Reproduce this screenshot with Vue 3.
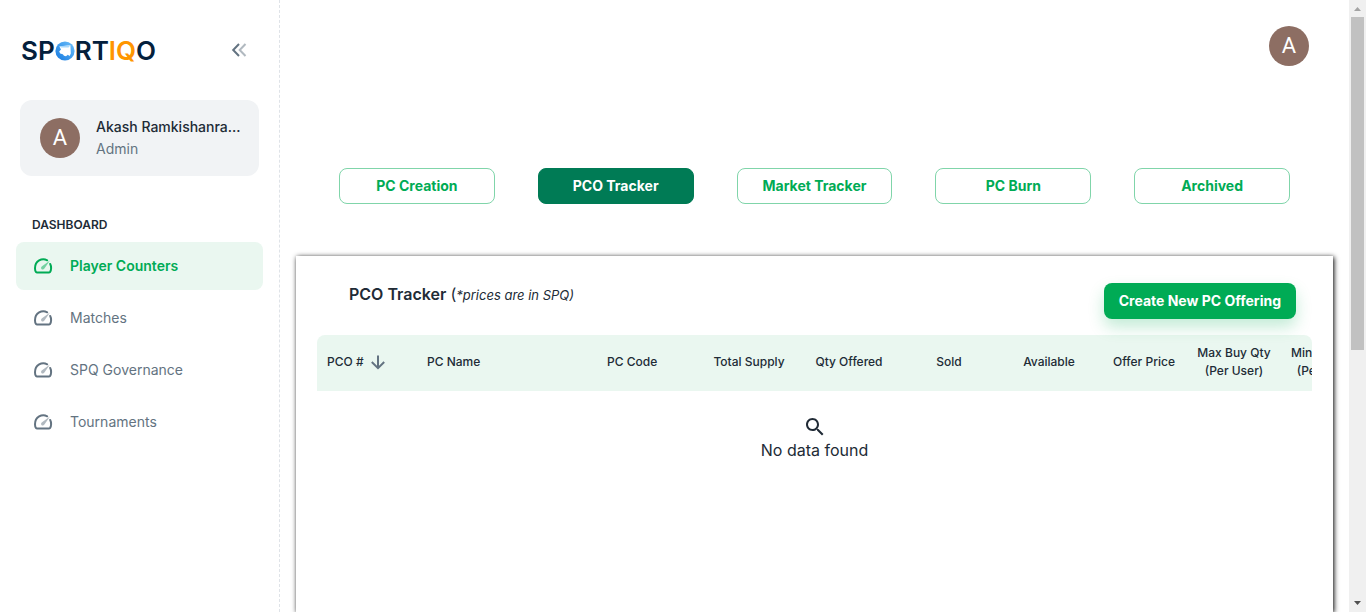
<script setup>
import { ref } from 'vue'

const navItems = ['Player Counters', 'Matches', 'SPQ Governance', 'Tournaments']
const activeNav = ref('Player Counters')

const tabs = ['PC Creation', 'PCO Tracker', 'Market Tracker', 'PC Burn', 'Archived']
const activeTab = ref('PCO Tracker')

const columns = [
  { lines: ['PCO #'], size: 'w100', align: 'left', sortable: true },
  { lines: ['PC Name'], size: 'w180', align: 'left' },
  { lines: ['PC Code'], size: 'w102', align: 'left' },
  { lines: ['Total Supply'], size: 'w100' },
  { lines: ['Qty Offered'], size: 'w100' },
  { lines: ['Sold'], size: 'w100' },
  { lines: ['Available'], size: 'w100' },
  { lines: ['Offer Price'], size: 'w90' },
  { lines: ['Max Buy Qty', '(Per User)'], size: 'w90' },
  { lines: ['Min Buy Qty', '(Per User)'], size: 'w94' },
]
</script>

<template>
  <div class="shell">
    <aside class="sidebar">
      <div class="brand">
        <a class="logo" href="#" aria-label="Sportiqo">
          <span>SP</span>
          <svg class="ball" viewBox="0 0 20 20" aria-hidden="true">
            <defs>
              <linearGradient id="ballFill" x1="0" y1="1" x2="1" y2="0">
                <stop offset="0" stop-color="#1479e0" />
                <stop offset="1" stop-color="#6fc0fa" />
              </linearGradient>
            </defs>
            <circle cx="10" cy="10" r="9.6" fill="url(#ballFill)" />
            <path d="M4.4 5.6 L15.4 4.2 L15.8 12.6 L14.6 15 L12.8 13.8 L11 15.2 L9 14.8 L7.8 13.2 L5.2 12.6 L4.2 10.6 L6 8.6 Z" fill="#fff" />
            <path d="M4.4 5.2 L15.4 4.2 L13.6 6.4 L6 6.4 Z" fill="#a8d8fc" />
          </svg>
          <span>RT</span><span class="accent">IQ</span><span>O</span>
        </a>
        <button class="collapse" type="button" aria-label="Collapse sidebar">
          <svg viewBox="0 0 16 16" aria-hidden="true">
            <path d="M14.5 2 L8.7 8 L14.5 14" class="faint" />
            <path d="M8 2 L2.2 8 L8 14" />
          </svg>
        </button>
      </div>

      <a class="profile" href="#">
        <span class="avatar">A</span>
        <span class="who">
          <strong>Akash Ramkishanra...</strong>
          <span>Admin</span>
        </span>
      </a>

      <nav class="nav" aria-label="Dashboard">
        <h2>DASHBOARD</h2>
        <a
          v-for="item in navItems"
          :key="item"
          href="#"
          :class="{ active: item === activeNav }"
          @click.prevent="activeNav = item"
        >
          <svg viewBox="0 0 22 22" aria-hidden="true">
            <path class="dial" d="M15.2 5.3 C10 2.6 3 5.8 3 13.2 C3 15.2 3.4 16.4 4 17 C4.3 17.3 4.6 17.4 5 17.4 H17 C17.4 17.4 17.7 17.3 18 17 C19.4 15.4 19.5 11.4 18.2 9" />
            <path class="needle" d="M18 5.6 L12.4 13.6 C11.6 15 9.4 14.9 9.1 13.3 C8.9 12.4 9.3 11.7 10 11.2 Z" />
          </svg>
          <span>{{ item }}</span>
        </a>
      </nav>
    </aside>

    <main class="main">
      <header class="topbar">
        <button class="avatar" type="button" aria-label="Account">A</button>
      </header>

      <div class="tabs">
        <button
          v-for="tab in tabs"
          :key="tab"
          type="button"
          :class="{ active: tab === activeTab }"
          @click="activeTab = tab"
        >{{ tab }}</button>
      </div>

      <section class="card">
        <div class="card-head">
          <h1>PCO Tracker <span class="note">(<em>*prices are in SPQ)</em></span></h1>
          <button class="create" type="button">Create New PC Offering</button>
        </div>

        <div class="table-wrap">
          <table>
            <thead>
              <tr>
                <th v-for="col in columns" :key="col.lines[0]" scope="col" :class="[col.size, col.align]">
                  <button v-if="col.sortable" class="sort" type="button">
                    {{ col.lines[0] }}
                    <svg viewBox="0 0 16 16" aria-hidden="true">
                      <path d="M8 1.5 V14 M1.8 8 L8 14.2 L14.2 8" />
                    </svg>
                  </button>
                  <template v-else>
                    <div v-for="line in col.lines" :key="line">{{ line }}</div>
                  </template>
                </th>
              </tr>
            </thead>
          </table>
        </div>

        <div class="empty">
          <svg viewBox="0 0 24 24" aria-hidden="true">
            <path d="M15.5 14h-.79l-.28-.27C15.41 12.59 16 11.11 16 9.5 16 5.91 13.09 3 9.5 3S3 5.91 3 9.5 5.91 16 9.5 16c1.61 0 3.09-.59 4.23-1.57l.27.28v.79l5 4.99L20.49 19l-4.99-5zm-6 0C7.01 14 5 11.99 5 9.5S7.01 5 9.5 5 14 7.01 14 9.5 11.99 14 9.5 14z" />
          </svg>
          <p>No data found</p>
        </div>
      </section>
    </main>

    <div class="scrollbar" aria-hidden="true">
      <svg viewBox="0 0 17 17"><path d="M5 11 L8.5 7 L12 11 Z" fill="#a3a3a3" /></svg>
      <div class="track"><div class="thumb"></div></div>
      <svg viewBox="0 0 17 17"><path d="M5 6 L8.5 10 L12 6 Z" fill="#505050" /></svg>
    </div>
  </div>
</template>

<style>
body {
  margin: 0;
  background: #fff;
}
</style>

<style scoped>
.shell {
  display: flex;
  height: 100vh;
  overflow: hidden;
  color: #212b36;
  font-family: Inter, "Liberation Sans", sans-serif;
  font-size: 14px;
  line-height: 22px;
}
.shell *,
.shell {
  box-sizing: border-box;
}
button {
  font: inherit;
  cursor: pointer;
  border: 0;
  padding: 0;
  background: none;
}
a {
  color: inherit;
  text-decoration: none;
}
h1,
h2,
p {
  margin: 0;
}

.sidebar {
  flex: 0 0 280px;
  min-width: 0;
  padding: 36px 16px 0;
  border-right: 1px dashed #dfe3e8;
}
.brand {
  display: flex;
  align-items: center;
  justify-content: space-between;
  height: 28px;
  padding: 0 16px 0 5px;
}
.logo {
  display: flex;
  align-items: center;
  padding-top: 2px;
  color: #04203c;
  font-size: 26px;
  font-weight: 600;
  line-height: 28px;
}
.logo .accent {
  color: #ff9500;
}
.ball {
  width: 20px;
  height: 20px;
}
.collapse {
  display: flex;
  color: #637381;
}
.collapse svg {
  width: 16px;
  height: 16px;
  fill: none;
  stroke: currentColor;
  stroke-width: 2;
}
.collapse .faint {
  opacity: 0.5;
}
.avatar {
  display: flex;
  flex-shrink: 0;
  align-items: center;
  justify-content: center;
  width: 40px;
  height: 40px;
  border-radius: 50%;
  background: #8d6e63;
  color: #fff;
  font-family: Roboto, sans-serif;
  font-size: 22px;
  line-height: 24px;
}
.profile {
  display: flex;
  align-items: center;
  gap: 16px;
  margin: 36px 4px 0;
  padding: 16px 16px 16px 20px;
  border-radius: 12px;
  background: #f1f3f5;
}
.who {
  display: flex;
  flex-direction: column;
  color: #637381;
  white-space: nowrap;
}
.who strong {
  color: #212b36;
  font-weight: 500;
}
.nav {
  display: flex;
  flex-direction: column;
  gap: 4px;
  margin-top: 40px;
}
.nav h2 {
  padding: 0 16px 4px;
  font-size: 12px;
  font-weight: 600;
  line-height: 18px;
}
.nav a {
  display: flex;
  align-items: center;
  gap: 16px;
  height: 48px;
  padding: 0 16px;
  border-radius: 8px;
  color: #637381;
}
.nav a.active {
  background: #eaf7f0;
  color: #00ab55;
  font-weight: 600;
}
.nav svg {
  width: 22px;
  height: 22px;
}
.dial {
  fill: none;
  stroke: currentColor;
  stroke-width: 2;
  stroke-linecap: round;
}
.needle {
  fill: currentColor;
  opacity: 0.5;
}

.main {
  display: flex;
  flex: 1;
  flex-direction: column;
  min-width: 0;
}
.topbar {
  display: flex;
  align-items: center;
  justify-content: flex-end;
  height: 92px;
  padding: 0 40px;
}
.tabs {
  display: grid;
  grid-template-columns: repeat(5, 1fr);
  gap: 43px;
  margin: 76px 59px 52px;
}
.tabs button {
  height: 36px;
  border: 1px solid #80d5aa;
  border-radius: 8px;
  color: #00ab55;
  font-weight: 700;
}
.tabs button.active {
  border-color: #007b55;
  background: #007b55;
  color: #fff;
}
.card {
  flex: 1;
  margin: 0 16px;
  padding: 24px 21px;
  background: #fff;
  box-shadow: 1px 1px 5px #000;
}
.card-head {
  display: flex;
  justify-content: space-between;
  padding: 3px 16px 16px 32px;
}
.card-head h1 {
  font-size: 16px;
  font-weight: 600;
  line-height: 22px;
}
.note {
  font-weight: 400;
}
.note em {
  font-size: 13px;
}
.create {
  height: 36px;
  padding: 0 15px;
  border-radius: 8px;
  background: #00ab55;
  box-shadow: 0 8px 16px rgba(0, 171, 85, 0.24);
  color: #fff;
  font-weight: 700;
}
.table-wrap {
  overflow: hidden;
  border-radius: 8px 8px 0 0;
}
table {
  width: 1056px;
  table-layout: fixed;
  border-collapse: collapse;
  background: #eaf7f0;
}
th {
  height: 56px;
  padding: 0 0 2px;
  font-size: 12px;
  font-weight: 500;
  line-height: 18px;
  white-space: nowrap;
}
th.left {
  padding-left: 10px;
  text-align: left;
}
.w90 { width: 90px; }
.w94 { width: 94px; }
.w100 { width: 100px; }
.w102 { width: 102px; }
.w180 { width: 180px; }
.sort {
  display: flex;
  align-items: center;
  gap: 6px;
  color: inherit;
}
.sort svg {
  width: 16px;
  height: 16px;
  fill: none;
  stroke: #637381;
  stroke-width: 2;
}
.empty {
  display: flex;
  flex-direction: column;
  align-items: center;
  margin-top: 24px;
  font-size: 16px;
  line-height: 22px;
}
.empty svg {
  width: 24px;
  height: 24px;
  fill: currentColor;
}

.scrollbar {
  display: flex;
  flex: 0 0 17px;
  flex-direction: column;
  background: #f0f0f0;
}
.scrollbar svg {
  width: 17px;
  height: 17px;
}
.track {
  flex: 1;
  padding: 0 2px;
}
.thumb {
  height: 57.6%;
  background: #c1c1c1;
}
</style>
